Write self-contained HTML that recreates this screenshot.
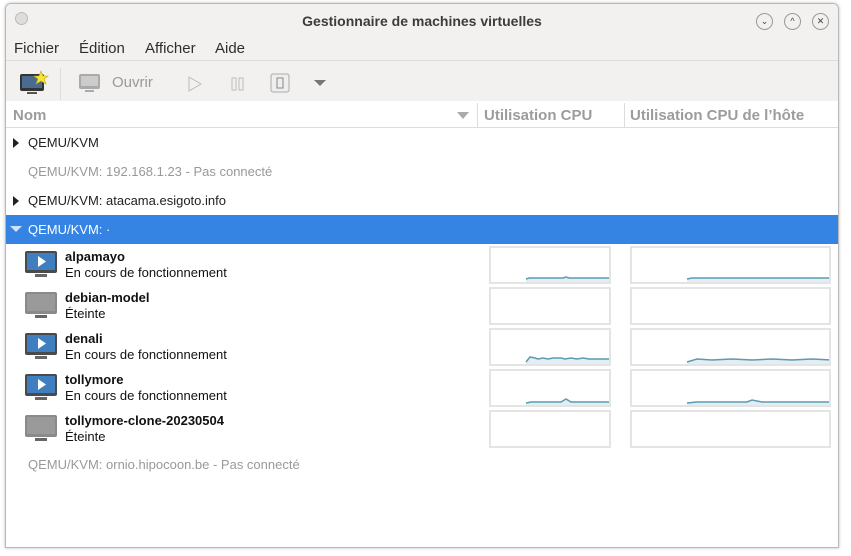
<!DOCTYPE html>
<html><head><meta charset="utf-8"><style>
body{margin:0;width:851px;height:556px;background:#fff;font-family:"Liberation Sans",sans-serif;position:relative;overflow:hidden}
.win{position:absolute;left:5px;top:3px;width:832px;height:543px;border:1px solid #b8b8b8;border-radius:6px 6px 0 0;background:#fff;overflow:hidden;box-shadow:0 0 3px rgba(0,0,0,.25)}
.top{position:absolute;left:0;top:0;width:100%;height:97px;background:#f2f1f0}
.a{position:absolute;white-space:nowrap}
.title{left:0;width:100%;text-align:center;top:9px;font-weight:bold;font-size:14px;color:#3c3c3c}
.menu{top:36px;font-size:15px;color:#2e2e2e}
.btn{position:absolute;top:9px;width:15px;height:15px;border:1px solid #999;border-radius:50%;font-size:9px;text-align:center;line-height:15px;color:#444}
.hdr{position:absolute;top:97px;height:26px;width:100%;border-bottom:1px solid #ddd;background:#fff}
.h{top:103px;font-size:15px;font-weight:bold;color:#9c9c9c}
.row{font-size:13px;color:#222}
.gray{color:#999}
.g{position:absolute;border:2px solid #e4e4e4;background:#fff;height:34px}
.vn{font-size:13px;font-weight:bold;color:#111}
.vs{font-size:13px;color:#111}
</style></head><body>
<div class="win">
<div class="top"></div>
<div class="a" style="left:9px;top:8px;width:11px;height:11px;border-radius:50%;background:#ddd;border:1px solid #bbb"></div>
<div class="a title">Gestionnaire de machines virtuelles</div>
<div class="btn" style="left:750px">&#8964;</div>
<div class="btn" style="left:778px">^</div>
<div class="btn" style="left:806px">✕</div>
<div class="a menu" style="left:8px">Fichier</div>
<div class="a menu" style="left:73px">Édition</div>
<div class="a menu" style="left:139px">Afficher</div>
<div class="a menu" style="left:209px">Aide</div>
<div class="a" style="left:0;top:56px;width:100%;height:1px;background:#ddd"></div>
<svg class="a" style="left:13px;top:66px" width="30" height="28"><rect x="1" y="4" width="24" height="17" rx="2" fill="#333"/><rect x="3" y="6" width="20" height="12" fill="#4a6a90"/><rect x="8" y="22" width="10" height="2" fill="#555"/><polygon points="22,1 24,6 29,6 25,9 27,14 22,11 17,14 19,9 15,6 20,6" fill="#f7e33a" stroke="#c9a800" stroke-width=".6"/></svg>
<div class="a" style="left:54px;top:64px;width:1px;height:32px;background:#ddd"></div>
<svg class="a" style="left:72px;top:69px" width="24" height="22"><rect x="1" y="1" width="21" height="15" rx="2" fill="#aaa"/><rect x="3" y="3" width="17" height="10" fill="#ccc"/><rect x="7" y="17" width="9" height="2" fill="#aaa"/></svg>
<div class="a" style="left:106px;top:70px;font-size:15px;color:#999">Ouvrir</div>
<svg class="a" style="left:181px;top:72px" width="16" height="16"><polygon points="2,1 14,8 2,15" fill="none" stroke="#bbb"/></svg>
<svg class="a" style="left:224px;top:72px" width="16" height="16"><rect x="2" y="2" width="4" height="12" fill="none" stroke="#bbb"/><rect x="9" y="2" width="4" height="12" fill="none" stroke="#bbb"/></svg>
<svg class="a" style="left:264px;top:69px" width="20" height="20"><rect x="1" y="1" width="18" height="18" rx="2" fill="#eee" stroke="#aaa"/><rect x="7" y="5" width="6" height="10" fill="none" stroke="#888"/></svg>
<svg class="a" style="left:307px;top:75px" width="14" height="8"><polygon points="1,1 13,1 7,7" fill="#777"/></svg>
<div class="hdr"></div>
<div class="a h" style="left:7px">Nom</div>
<svg class="a" style="left:451px;top:108px" width="12" height="8"><polygon points="0,0 12,0 6,7" fill="#aaa"/></svg>
<div class="a" style="left:471px;top:99px;width:1px;height:24px;background:#ddd"></div>
<div class="a h" style="left:478px">Utilisation CPU</div>
<div class="a" style="left:618px;top:99px;width:1px;height:24px;background:#ddd"></div>
<div class="a h" style="left:624px">Utilisation CPU de l’hôte</div>
<svg class="a" style="left:6px;top:134px" width="8" height="10"><polygon points="1,0 7,5 1,10" fill="#222"/></svg>
<div class="a row" style="left:22px;top:131px">QEMU/KVM</div>
<div class="a row gray" style="left:22px;top:160px">QEMU/KVM: 192.168.1.23 - Pas connecté</div>
<svg class="a" style="left:6px;top:192px" width="8" height="10"><polygon points="1,0 7,5 1,10" fill="#222"/></svg>
<div class="a row" style="left:22px;top:189px">QEMU/KVM: atacama.esigoto.info</div>
<div class="a" style="left:0;top:211px;width:100%;height:29px;background:#3584e4"></div>
<svg class="a" style="left:4px;top:222px" width="12" height="8"><polygon points="0,0 12,0 6,6" fill="#cfe0f7"/></svg>
<div class="a row" style="left:22px;top:218px;color:#fff">QEMU/KVM: ·</div>
<div id="vms"></div>
<div class="a row gray" style="left:22px;top:453px">QEMU/KVM: ornio.hipocoon.be - Pas connecté</div>
</div>
<script>
var vms=[["alpamayo","En cours de fonctionnement",1],["debian-model","Éteinte",0],["denali","En cours de fonctionnement",1],["tollymore","En cours de fonctionnement",1],["tollymore-clone-20230504","Éteinte",0]];
var lines=[
[[35,"M35,31 L38,30 L72,30 L75,29 L78,30 L120,30"],[55,"M55,31 L60,30 L200,30"]],
[null,null],
[[35,"M35,32 L39,27 L44,28 L47,29 L52,28 L57,29 L62,28 L70,28 L74,29 L80,28 L86,29 L92,28 L98,29 L120,29"],[55,"M55,32 L65,29 L80,30 L100,29 L120,30 L140,29 L160,30 L180,29 L200,30"]],
[[35,"M35,32 L40,31 L60,31 L70,31 L75,28 L80,31 L95,31 L120,31"],[55,"M55,32 L65,31 L115,31 L120,29 L130,31 L200,31"]],
[null,null]];
var h="";
vms.forEach(function(v,i){var y=241+i*41;
var c=v[2]?'<rect x="1" y="1" width="32" height="22" rx="2" fill="#4a4a4a"/><rect x="3" y="3" width="28" height="17" fill="#3f7fc0"/><polygon points="14,6 22,11.5 14,17" fill="#fff"/>':'<rect x="1" y="1" width="32" height="22" rx="2" fill="#8a8a8a"/><rect x="3" y="3" width="28" height="17" fill="#9a9a9a"/>';
h+='<svg class="a" style="left:18px;top:'+(y+5)+'px" width="34" height="30">'+c+'<rect x="11" y="24" width="12" height="3" fill="#666"/></svg>';
h+='<div class="a vn" style="left:59px;top:'+(y+4)+'px">'+v[0]+'</div><div class="a vs" style="left:59px;top:'+(y+20)+'px">'+v[1]+'</div>';
[[483,118,0],[624,197,1]].forEach(function(g){var p=lines[i][g[2]];
h+='<div class="g" style="left:'+g[0]+'px;top:'+(y+1)+'px;width:'+g[1]+'px">'+(p?'<svg width="'+g[1]+'" height="34" style="position:absolute;left:0;top:0"><path d="'+p[1]+' L'+g[1]+',34 L'+p[0]+',34Z" fill="#e3eef3" stroke="none"/><path d="'+p[1]+'" fill="none" stroke="#5d9ab3" stroke-width="1.5"/></svg>':'')+'</div>';});
});
document.getElementById("vms").innerHTML=h;
</script>
</body></html>
